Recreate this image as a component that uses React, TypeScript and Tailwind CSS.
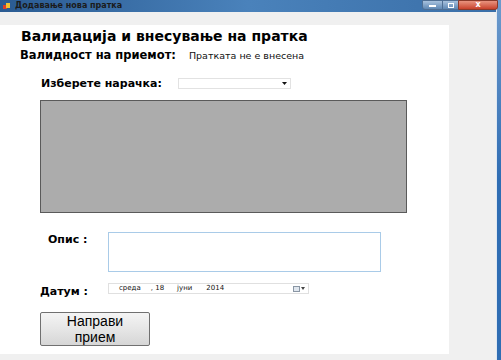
import React from "react";

export default function App() {
  const f = { fontFamily: '"DejaVu Sans", "Liberation Sans", Arial, sans-serif' };
  return (
    <div className="w-[501px] h-[360px] flex flex-row bg-[#f0f0f0] overflow-hidden" style={f}>
      <div className="w-[496px] flex flex-col">
        {/* title bar */}
        <div className="h-[12px] flex flex-row items-center bg-gradient-to-r from-[#2a5b92] via-[#4a82bb] to-[#3a6fa8] relative">
          <div className="ml-[3px] w-[7px] h-[7px] relative">
            <div className="absolute left-0 top-[2px] w-[4px] h-[4px] bg-[#d8402a]" />
            <div className="absolute left-[3px] top-0 w-[4px] h-[5px] bg-[#f2c230]" />
          </div>
          <span className="ml-[5px] text-[8px] leading-[10px] font-bold text-[#1b1b1b]">Додавање нова пратка</span>
          <div className="ml-auto mr-[-2px] flex flex-row h-[10px] self-start">
            <div className="w-[21px] h-[10px] border border-[#4f6f94] rounded-bl-[3px] bg-gradient-to-b from-[#a8c2de] to-[#5f88b4] flex items-end justify-center pb-[2px]">
              <div className="w-[7px] h-[2px] bg-white" />
            </div>
            <div className="w-[15px] h-[10px] border-y border-[#4f6f94] bg-gradient-to-b from-[#a8c2de] to-[#5f88b4] flex items-center justify-center">
              <div className="w-[6px] h-[5px] border border-white" />
            </div>
            <div className="w-[40px] h-[10px] border border-[#8a3a2a] rounded-br-[3px] bg-gradient-to-b from-[#e8937f] to-[#c7402a] flex items-center justify-center">
              <span className="text-[8px] leading-[8px] font-bold text-white">x</span>
            </div>
          </div>
        </div>
        {/* client */}
        <div className="flex flex-col pt-[13px]">
          <div className="w-[449px] h-[329px] bg-white flex flex-col">
            <div className="ml-[21px] mt-[3px] text-[14px] leading-[17px] font-bold text-black">
              Валидација и внесување на пратка
            </div>
            <div className="ml-[20px] mt-[4px] flex flex-row items-baseline">
              <span className="text-[11.5px] leading-[13px] font-bold text-black">Валидност на приемот:</span>
              <span className="ml-[13px] text-[9.5px] leading-[13px] text-[#111]">Пратката не е внесена</span>
            </div>
            <div className="mt-[15px] flex flex-row items-center">
              <span className="ml-[41px] w-[137px] text-[11px] leading-[13px] font-bold text-black">Изберете нарачка:</span>
              <div className="w-[113px] h-[11px] border border-[#e2e2e2] bg-white flex items-center justify-end pr-[3px]">
                <svg width="5" height="3" viewBox="0 0 5 3"><path d="M0 0H5L2.5 3Z" fill="#111" /></svg>
              </div>
            </div>
            <div className="ml-[40px] mt-[10px] w-[367px] h-[113px] bg-[#acacac] border border-[#5a5a5a]" />
            <div className="mt-[19px] flex flex-row items-start">
              <span className="ml-[48px] w-[60px] mt-[1px] text-[11px] leading-[13px] font-bold text-black">Опис :</span>
              <div className="w-[273px] h-[40px] border border-[#a9cbe8] bg-white" />
            </div>
            <div className="mt-[11px] flex flex-row items-start">
              <span className="ml-[40px] w-[68px] mt-[2px] text-[11px] leading-[13px] font-bold text-black">Датум :</span>
              <div className="w-[201px] h-[11px] border border-[#e0e0e0] bg-white flex flex-row items-center text-[7px] leading-[9px] text-[#111]">
                <span className="ml-[10px]">среда</span>
                <span className="ml-[10px]">, 18</span>
                <span className="ml-[13px]">јуни</span>
                <span className="ml-[14px]">2014</span>
                <div className="ml-auto mr-[3px] flex flex-row items-center gap-[1px]">
                  <div className="w-[7px] h-[6px] border border-[#8a96a4] bg-[#dfe6ee]" />
                  <svg width="4" height="3" viewBox="0 0 4 3"><path d="M0 0H4L2 3Z" fill="#444" /></svg>
                </div>
              </div>
            </div>
            <div className="ml-[40px] mt-[14px] w-[110px] h-[34px] border border-[#707070] rounded-[2px] bg-gradient-to-b from-[#f4f4f4] via-[#e6e6e6] to-[#d6d6d6] flex flex-col items-center justify-center" style={{ fontFamily: '"Liberation Sans", Arial, sans-serif' }}>
              <span className="text-[14px] leading-[16px] text-black">Направи</span>
              <span className="text-[14px] leading-[16px] text-black">прием</span>
            </div>
          </div>
        </div>
      </div>
      <div className="w-[5px] h-full flex flex-row">
        <div className="w-[1px] h-full bg-[#dfe8f2]" />
        <div className="w-[4px] h-full bg-gradient-to-b from-[#6d9bcd] via-[#2f6db3] to-[#2f6db3]" />
      </div>
    </div>
  );
}
